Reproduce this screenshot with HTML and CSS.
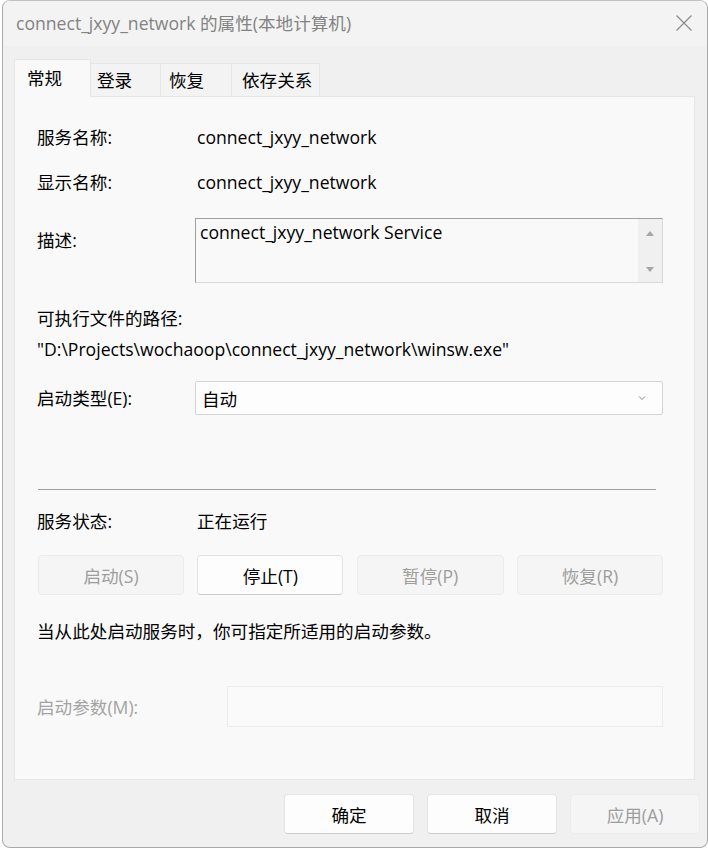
FILE: index.html
```html
<!DOCTYPE html>
<html lang="zh-CN">
<head>
<meta charset="utf-8">
<title>connect_jxyy_network 的属性(本地计算机)</title>
<link rel="stylesheet" href="styles.css">
</head>
<body>
<div class="window">
  <div class="titlebar">
    <span class="title">connect_jxyy_network 的属性(本地计算机)</span>
    <svg class="close" width="16" height="16" viewBox="0 0 16 16"><path d="M0.5 0.5 L15.5 15.5 M15.5 0.5 L0.5 15.5" stroke="#8a8a8a" stroke-width="1.2" fill="none"/></svg>
  </div>
  <div class="tabs">
    <div class="tab active t1">常规</div>
    <div class="tab t2">登录</div>
    <div class="tab t3">恢复</div>
    <div class="tab t4">依存关系</div>
  </div>
  <div class="panel">
    <div class="row r1"><span class="label">服务名称:</span><span class="value">connect_jxyy_network</span></div>
    <div class="row r2"><span class="label">显示名称:</span><span class="value">connect_jxyy_network</span></div>
    <div class="row r3">
      <span class="label desc-label">描述:</span>
      <div class="descbox">
        <div class="desctext">connect_jxyy_network Service</div>
        <div class="scroll">
          <svg width="10" height="8" viewBox="0 0 10 8"><path d="M1 7 L5 2 L9 7 Z" fill="#a6a6a6"/></svg>
          <svg width="10" height="8" viewBox="0 0 10 8"><path d="M1 1 L5 6 L9 1 Z" fill="#a6a6a6"/></svg>
        </div>
      </div>
    </div>
    <div class="line r4">可执行文件的路径:</div>
    <div class="line r5">"D:\Projects\wochaoop\connect_jxyy_network\winsw.exe"</div>
    <div class="row r6">
      <span class="label">启动类型(E):</span>
      <div class="combo">
        <span>自动</span>
        <svg width="8" height="6" viewBox="0 0 8 6"><path d="M1 1.5 L4 4.5 L7 1.5" stroke="#8a8a8a" stroke-width="1" fill="none"/></svg>
      </div>
    </div>
    <div class="sep"></div>
    <div class="row r7"><span class="label">服务状态:</span><span class="value">正在运行</span></div>
    <div class="btns">
      <div class="btn disabled">启动(S)</div>
      <div class="btn">停止(T)</div>
      <div class="btn disabled">暂停(P)</div>
      <div class="btn disabled">恢复(R)</div>
    </div>
    <div class="line r8">当从此处启动服务时，你可指定所适用的启动参数。</div>
    <div class="row r9">
      <span class="label param-label">启动参数(M):</span>
      <div class="param"></div>
    </div>
  </div>
  <div class="footer">
    <div class="fbtn">确定</div>
    <div class="fbtn">取消</div>
    <div class="fbtn disabled">应用(A)</div>
  </div>
</div>
</body>
</html>
```

FILE: styles.css
```css
html, body {
  margin: 0;
  padding: 0;
  background: #ffffff;
}
body {
  font-family: "Segoe UI", "Open Sans", "Noto Sans CJK SC", sans-serif;
  font-size: 17.6px;
  color: #000;
}
.window {
  margin-left: 2px;
  width: 706px;
  height: 848px;
  box-sizing: border-box;
  border: 1px solid #a9a9a9;
  border-top-color: #c2c2c2;
  border-radius: 8px;
  background: #f0f0f0;
  overflow: hidden;
}
.titlebar {
  height: 45px;
  background: #f3f3f3;
  display: flex;
  align-items: center;
  justify-content: space-between;
  padding: 0 15px 0 13px;
}
.title {
  color: #838383;
  line-height: 45px;
}
.close {
  display: block;
  margin-top: -1px;
}
.tabs {
  height: 50px;
  display: flex;
  align-items: flex-end;
  padding-left: 11px;
}
.tab {
  box-sizing: border-box;
  height: 33px;
  line-height: 33px;
  background: #f3f3f3;
  border: 1px solid #e6e6e6;
  border-bottom: none;
  border-left: none;
}
.tab.active {
  height: 38px;
  line-height: 36px;
  background: #f9f9f9;
  border-left: 1px solid #e6e6e6;
  margin-bottom: -1px;
  position: relative;
  z-index: 1;
}
.t1 { width: 77px; padding-left: 12px; }
.t2 { width: 70px; padding-left: 6px; }
.t3 { width: 71px; padding-left: 8px; }
.t4 { width: 88px; padding-left: 10px; }
.panel {
  margin-left: 11px;
  width: 681px;
  height: 684px;
  box-sizing: border-box;
  background: #f9f9f9;
  border: 1px solid #e6e6e6;
  padding: 0 0 0 22px;
}
.row {
  display: flex;
  align-items: flex-start;
}
.label {
  width: 158px;
  flex: none;
  line-height: 24px;
}
.value {
  line-height: 24px;
  padding-left: 2px;
}
.line {
  line-height: 24px;
}
.r1 { margin-top: 28px; }
.r2 { margin-top: 21px; }
.r3 { margin-top: 24px; }
.desc-label { margin-top: 10px; }
.descbox {
  width: 468px;
  height: 65px;
  box-sizing: border-box;
  border: 1px solid #d9d9d9;
  border-top-color: #a0a0a0;
  border-left-color: #a0a0a0;
  display: flex;
  justify-content: space-between;
}
.desctext {
  padding: 1px 0 0 4px;
  line-height: 24px;
}
.scroll {
  width: 24px;
  background: #f0f0f0;
  display: flex;
  flex-direction: column;
  align-items: center;
  justify-content: space-between;
  padding: 10px 0 8px;
  box-sizing: border-box;
}
.scroll svg { display: block; }
.r4 { margin-top: 23px; }
.r5 { margin-top: 7px; }
.r6 { margin-top: 20px; align-items: center; }
.combo {
  width: 468px;
  height: 34px;
  box-sizing: border-box;
  border: 1px solid #d4d4d4;
  border-radius: 2px;
  background: #fdfdfd;
  display: flex;
  align-items: center;
  justify-content: space-between;
  padding: 0 16px 0 6px;
}
.combo svg { display: block; }
.sep {
  margin-top: 74px;
  width: 618px;
  height: 1px;
  background: #a0a0a0;
  margin-left: 1px;
}
.r7 { margin-top: 19px; }
.btns {
  margin-top: 22px;
  margin-left: 1px;
  width: 625px;
  display: grid;
  grid-template-columns: 146px 146px 147px 146px;
  justify-content: space-between;
}
.btn, .fbtn {
  box-sizing: border-box;
  height: 40px;
  border: 1px solid #e3e3e3;
  border-bottom-color: #cccccc;
  border-radius: 4px;
  background: #fdfdfd;
  display: flex;
  align-items: center;
  justify-content: center;
}
.btn.disabled, .fbtn.disabled {
  background: #f5f5f5;
  border-color: #ebebeb;
  color: #9d9d9d;
}
.r8 { margin-top: 24px; }
.r9 { margin-top: 43px; align-items: center; }
.param-label {
  width: 190px;
  color: #a3a3a3;
}
.param {
  width: 436px;
  height: 41px;
  box-sizing: border-box;
  border: 1px solid #ececec;
  background: #fafafa;
}
.footer {
  display: flex;
  justify-content: flex-end;
  gap: 13px;
  padding: 14px 7px 0 0;
}
.fbtn {
  width: 130px;
  height: 40px;
}
```
